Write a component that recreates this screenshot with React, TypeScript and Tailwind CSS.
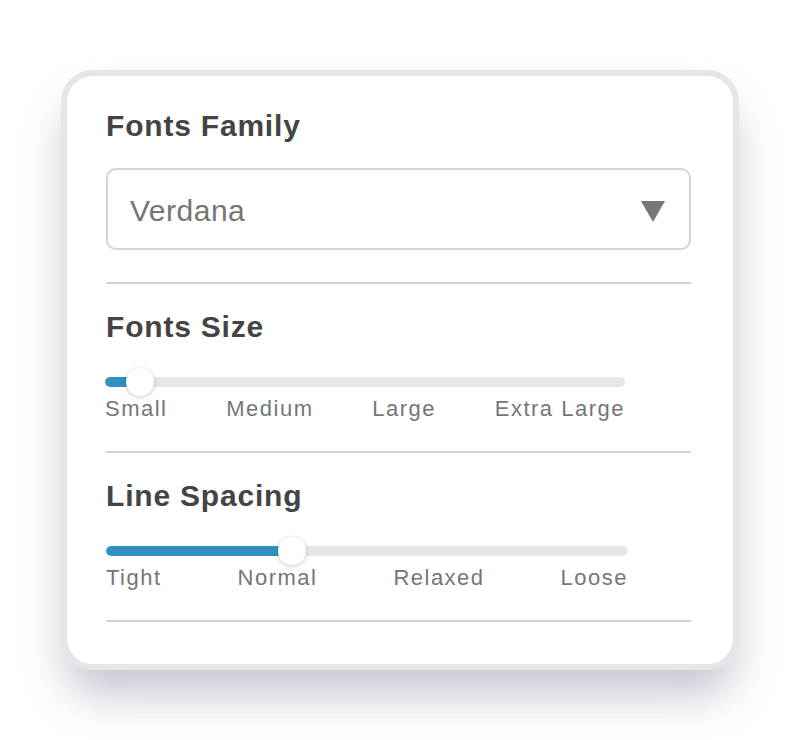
import React from "react";

const font = { fontFamily: '"Liberation Sans", Arial, sans-serif' };

function Heading({ children }: { children: React.ReactNode }) {
  return (
    <div className="text-[30px] leading-[34px] font-bold tracking-[0.8px] text-[#444444]">
      {children}
    </div>
  );
}

function Slider({
  width,
  fill,
  thumb,
  labels,
}: {
  width: number;
  fill: number;
  thumb: number;
  labels: string[];
}) {
  return (
    <div style={{ width }}>
      <div className="relative h-[28px] flex items-center">
        <div className="w-full h-[10px] rounded-full bg-[#e7e7e7] overflow-hidden">
          <div className="h-full bg-[#3190c0] rounded-full" style={{ width: fill }} />
        </div>
        <div
          className="absolute top-0 w-[28px] h-[28px] rounded-full bg-white shadow-[0_1px_4px_rgba(0,0,0,0.22)]"
          style={{ left: thumb - 14 }}
        />
      </div>
      <div className="flex justify-between text-[22px] leading-[26px] tracking-[1.5px] text-[#767676]">
        {labels.map((l) => (
          <span key={l}>{l}</span>
        ))}
      </div>
    </div>
  );
}

export default function App() {
  return (
    <div className="w-[800px] h-[740px] bg-white pt-[70px] pl-[61px]" style={font}>
      <div className="w-[678px] h-[600px] border-[6px] border-[#e6e6e6] rounded-[32px] bg-white overflow-hidden shadow-[0_30px_45px_-6px_rgba(60,64,100,0.3)]">
        <div className="pl-[39px] pr-[42px]">
          <div className="pt-[33px] pb-[32px]">
            <Heading>Fonts Family</Heading>
            <div className="mt-[25px] h-[82px] border-2 border-[#d4d4d4] rounded-[10px] flex items-center justify-between pl-[22px] pr-[24px]">
              <span className="text-[30px] tracking-[0.5px] text-[#757575] leading-none mt-[3px]">Verdana</span>
              <svg width="24" height="21" viewBox="0 0 24 21" className="mt-[4px]">
                <polygon points="0,0 24,0 12,21" fill="#777777" />
              </svg>
            </div>
          </div>
          <div className="h-[2px] bg-[#d3d3d3]" />
          <div className="pt-[26px] pb-[29px]">
            <Heading>Fonts Size</Heading>
            <div className="mt-[24px] -ml-[1px]">
              <Slider
                width={520}
                fill={35}
                thumb={35}
                labels={["Small", "Medium", "Large", "Extra Large"]}
              />
            </div>
          </div>
          <div className="h-[2px] bg-[#d3d3d3]" />
          <div className="pt-[26px] pb-[29px]">
            <Heading>Line Spacing</Heading>
            <div className="mt-[24px]">
              <Slider
                width={522}
                fill={180}
                thumb={186}
                labels={["Tight", "Normal", "Relaxed", "Loose"]}
              />
            </div>
          </div>
          <div className="h-[2px] bg-[#d3d3d3]" />
        </div>
      </div>
    </div>
  );
}
